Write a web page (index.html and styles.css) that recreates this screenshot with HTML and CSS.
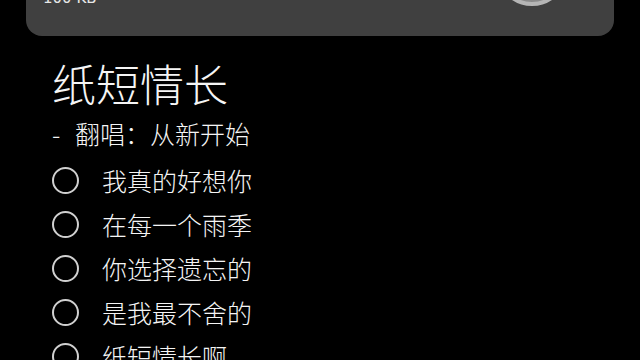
FILE: index.html
```
<!DOCTYPE html>
<html lang="zh">
<head>
<meta charset="utf-8">
<link rel="stylesheet" href="styles.css">
</head>
<body>
<div class="card">
  <div class="card-info">
    <div class="size">100 KB</div>
  </div>
  <div class="disc"></div>
</div>
<div class="song">
  <h1 class="title">纸短情长</h1>
  <div class="sub"><span class="dash">-</span>翻唱：从新开始</div>
  <ul class="lyrics">
    <li class="row"><span class="radio"></span><span class="line">我真的好想你</span></li>
    <li class="row"><span class="radio"></span><span class="line">在每一个雨季</span></li>
    <li class="row"><span class="radio"></span><span class="line">你选择遗忘的</span></li>
    <li class="row"><span class="radio"></span><span class="line">是我最不舍的</span></li>
    <li class="row"><span class="radio"></span><span class="line">纸短情长啊</span></li>
  </ul>
</div>
</body>
</html>
```
FILE: styles.css
```
html, body {
  margin: 0;
  padding: 0;
  background: #000;
  height: 360px;
  overflow: hidden;
}
body {
  font-family: "Noto Sans CJK SC", "Noto Sans", sans-serif;
  color: #f5f5f5;
}
.card {
  margin: -64px 26px 0;
  height: 100px;
  background: #404040;
  border-radius: 0 0 16px 16px;
  display: flex;
  justify-content: space-between;
  overflow: hidden;
  padding: 0 46px 0 17px;
}
.card-info {
  display: flex;
  flex-direction: column;
  justify-content: flex-start;
}
.size {
  margin-top: 54px;
  font-family: "DejaVu Sans", sans-serif;
  font-size: 15px;
  line-height: 16px;
  color: #e6e6e6;
}
.disc {
  width: 72px;
  height: 72px;
  margin-top: -2px;
  border-radius: 50%;
  border: 4px solid #b5b5b5;
  background: #8a8a8a;
  box-sizing: border-box;
}
.song {
  padding: 0 0 0 52px;
}
.title {
  margin: 20px 0 0;
  font-size: 44px;
  font-weight: 300;
  line-height: 54px;
  letter-spacing: 0;
}
.sub {
  margin-top: 8px;
  font-size: 25px;
  font-weight: 300;
  line-height: 30px;
}
.dash {
  display: inline-block;
  width: 23px;
}
.lyrics {
  list-style: none;
  margin: 10px 0 0;
  padding: 0;
}
.row {
  display: flex;
  align-items: center;
  height: 44px;
}
.radio {
  width: 27px;
  height: 27px;
  border: 2px solid #d0d0d0;
  border-radius: 50%;
  box-sizing: border-box;
  flex: none;
}
.line {
  margin-left: 23px;
  font-size: 25px;
  font-weight: 300;
  line-height: 30px;
}
```
